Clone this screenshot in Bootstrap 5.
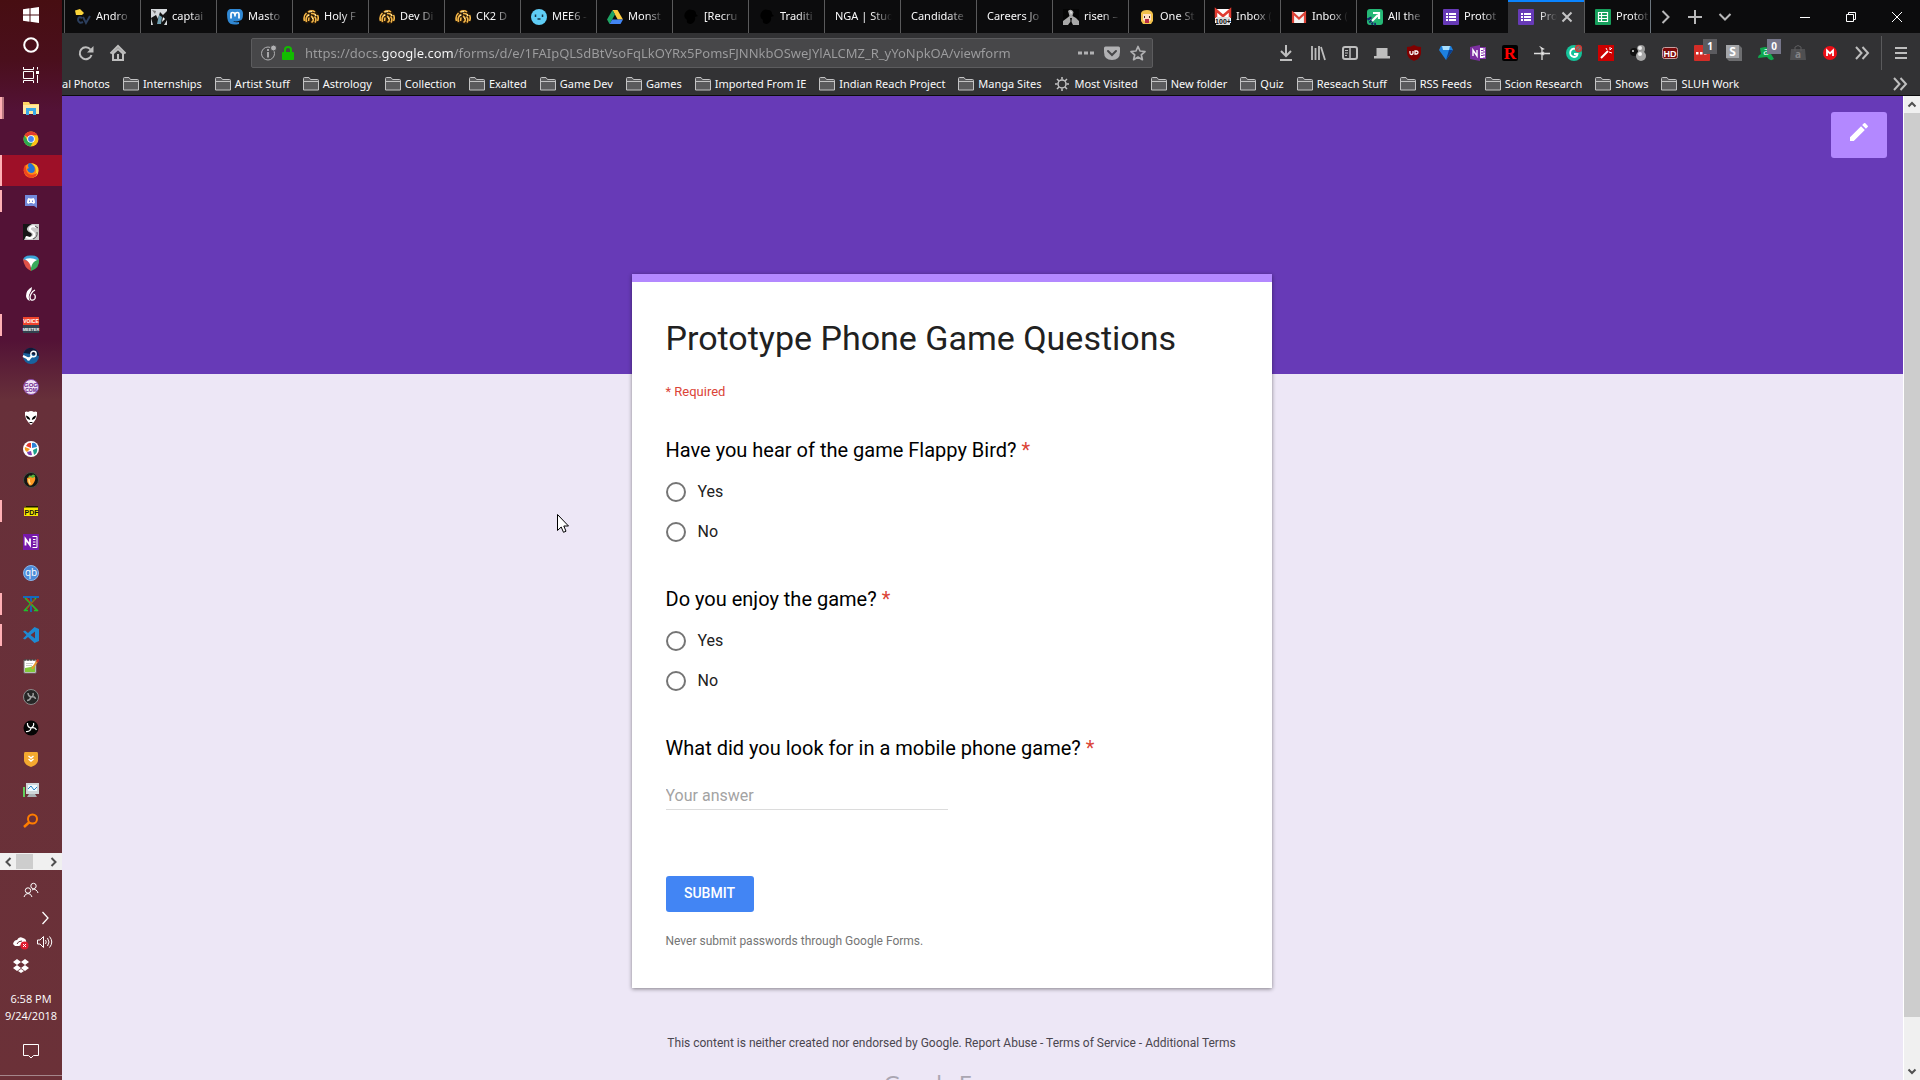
<!DOCTYPE html>
<html lang="en">
<head>
<meta charset="utf-8">
<meta name="viewport" content="width=device-width, initial-scale=1">
<title>Prototype Phone Game Questions</title>
<link href="https://cdn.jsdelivr.net/npm/bootstrap@5.3.0/dist/css/bootstrap.min.css" rel="stylesheet">
<style>
:root{--ui:"Noto Sans","Open Sans",sans-serif;--form:Roboto,"Liberation Sans",sans-serif}
body{font-family:var(--ui);background:#ede7f6}
svg{display:block;flex:none;overflow:visible}
button{font-family:inherit}
.plain{background:none;border:0;padding:0;color:inherit}
/* taskbar */
.taskbar{width:62px;background:linear-gradient(#470e12 0,#4a0f1c 60px,#531236 110px,#531236 340px,#67303a 400px,#6b3138 100%);color:#fff}
.task{height:31px;width:62px;position:relative;padding-bottom:1px}
.sys{height:30px;padding:0}
.systray{margin-bottom:3px}
.task.open::before{content:"";position:absolute;left:0;top:4px;width:2px;height:22px;background:#ffb0b5}
.task.multi::before{width:4px;border-right:2px solid #b97880}
.task.current{background:#9e1028}
.task.current::before{top:0;height:31px}
.hscroll{height:17px;background:#f0f0f0;color:#505050;margin-bottom:5px}
.hthumb{width:17px;height:15px;background:#cdcdcd}
.trayrow{height:24px;padding:0 9px 0 13px}
.clock{font:11px/17px "Open Sans",sans-serif}
.notice{margin-top:12px}
.deskline{height:1px;background:#a5868b}
/* browser chrome */
.tabstrip{height:33px;background:#0c0c0d;color:#f9f9fa;padding-left:2px}
.tabx{width:76px;height:33px;flex:none;border-left:1px solid #5a5a5b;padding-left:10px;font-size:11px;color:inherit;text-decoration:none}
.tabx .ttl{white-space:nowrap;flex:1;min-width:0;margin-left:5px;margin-right:8px;-webkit-mask-image:linear-gradient(90deg,#000 50%,transparent);mask-image:linear-gradient(90deg,#000 50%,transparent)}
.tabx .ttl:first-child{margin-left:0;-webkit-mask-image:linear-gradient(90deg,#000 65%,transparent);mask-image:linear-gradient(90deg,#000 65%,transparent)}
.tabx.now{background:#323234;border-left:0;box-shadow:inset 0 2px #0a84ff;padding-right:9px}
.tabx.now .ttl{margin-right:2px;margin-left:6px;-webkit-mask-image:linear-gradient(90deg,#000 0,transparent);mask-image:linear-gradient(90deg,#000 0,transparent)}
.tabx.cut{width:66px}
.tabx.cut .ttl{margin-right:0}
.stripbtn{width:30px;height:33px;color:#b8b8b9}
.winbtn{width:46px;height:33px;color:#fff}
.toolbar{height:40px;background:#323234;color:#bebebe;padding:0 3px 0 8px}
.tool{width:32px;height:32px;position:relative}
.urlbar{height:30px;margin:0 117px;background:#474749;border:1px solid #5c5c5e;border-radius:2px;padding:0 6px 0 9px}
.urlbar input{font-size:13px;line-height:20px;border:0;outline:0;padding:0;min-width:0;margin-left:10px;color:transparent;background:linear-gradient(90deg,#9d9d9f 77px,#f9f9fa 77px,#f9f9fa 149px,#9d9d9f 149px);-webkit-background-clip:text;background-clip:text}
.count{position:absolute;left:17px;top:2px;width:14px;height:15px;background:#5b5b5f;color:#fff;font:bold 10px/15px "Open Sans",sans-serif}
.count.soft{background:#76768a}
.vrule{width:1px;height:34px;background:#5a5a5c;margin:0 3px}
.bookmarks{height:23px;background:#323234;border-bottom:1px solid #0c0c0d;color:#f9f9fa;font-size:11px;overflow:hidden;padding-right:12px}
.bookmarks a{color:inherit;text-decoration:none;white-space:nowrap;gap:4px}
.bmlist{gap:13px}
.morebm{color:#bebebe}
/* form page */
.page{background:linear-gradient(#673ab7 278px,#ede7f6 278px);font-family:var(--form);position:relative;padding-right:62px}
.editbtn{position:absolute;right:16px;top:16px;width:56px;height:46px;background:#b388ff;border-radius:3px;padding-bottom:6px}
.sheet{width:640px;max-width:100%;margin-top:178px;border-top:8px solid #b388ff;background:#fff;padding:36px 34px 39px;box-shadow:0 1px 4px rgba(0,0,0,.45)}
.sheet h1{font-size:34px;line-height:40px;font-weight:400;color:#212121;margin:0}
.req{font-size:13px;line-height:20px;color:#db4437;margin:24px 0 0;padding-bottom:1px}
.sheet fieldset,.openq{margin-top:35px}
.qtitle{font-size:20px;line-height:24px;color:#000;margin:0 0 10px;float:none}
.star{color:#db4437}
.choice{height:40px;gap:12px;font-size:16px;line-height:20px;color:#212121}
.choice .form-check-input{width:20px;height:20px;border:2px solid #757575;margin:0;flex:none}
.answer{width:282px;height:28px;border:0;border-bottom:1px solid #dcdcdc;padding:0;font-size:16px;display:block;margin-top:22px}
.answer::placeholder{color:#a3a3a3}
.send{width:88px;height:36px;margin-top:66px;background:#4285f4;color:#fff;font-size:14px;line-height:20px;font-weight:500;border:0;border-radius:3px;padding:0 0 2px}
.never{font-size:12px;line-height:16px;color:#757575;margin:21px 0 0}
.legal{font-size:12px;line-height:16px;color:#4a464f;margin-top:47px}
.legal a{color:inherit;text-decoration:none}
.brand{font:22px/32px Lato,sans-serif;color:#aaa6b2;margin-top:16px}
.vscroll{width:17px;background:#f0f0f0;border-left:1px solid #fff;color:#505050}
.vthumb{background:#cdcdcd;flex:904}
.vrest{flex:46}
.pointer{position:absolute;left:495px;top:418px}
</style>
<script src="https://cdn.jsdelivr.net/npm/bootstrap@5.3.0/dist/js/bootstrap.bundle.min.js"></script>
</head>
<body class="d-flex vh-100 overflow-hidden">
<svg width="0" height="0" class="position-absolute" aria-hidden="true">
<defs>
<symbol id="folder" viewBox="0 0 16 14"><path d="M.5 13V1.500Q.5.5 1.500.5H6L7.500 2.500H14.500Q15.500 2.500 15.500 3.500V13Z" fill="#5b5b5d" stroke="#c3c3c4"/><path d="M1 4.500H15" stroke="#c3c3c4"/></symbol>
<symbol id="lion" viewBox="0 0 16 16"><path d="M0 11Q0 5 4 2Q8-.5 12 1.500Q16 4 16 10Q15 14 11 15.500L6 13L4 15Z" fill="#2a1a08"/><path d="M1.500 12Q0 7 3.500 4M3.500 13Q2 8 6 5.500M5 3Q9 .5 12 3M8 4.500Q12 4 13 7M14.500 6Q16 9 14.500 12M11.500 7.500Q14 10 12 13.500M8 7Q11 8.500 10 12L8.500 13.500M6 8.500L5.500 12" fill="none" stroke="#f6b848" stroke-width="1.600"/><path d="M6 3L9 2.500M4.500 7L6.500 6M12 5L13 7M9 8.500L10 10" stroke="#fff0b0" fill="none"/></symbol>
<symbol id="gform" viewBox="0 0 16 16"><rect width="16" height="16" rx="1" fill="#673ab7"/><path d="M3 4H5V6H3ZM3 7H5V9H3ZM3 10H5V12H3ZM6 4H13V6H6ZM6 7H13V9H6ZM6 10H13V12H6Z" fill="#fff"/></symbol>
<symbol id="darkbird" viewBox="0 0 16 16"><path d="M2 4Q5-1 9 1Q13 1 13 5L15 7L12 8Q13 13 8 15Q3 15 4 11Q0 9 2 4Z" fill="#000"/></symbol>
<symbol id="chev" viewBox="0 0 16 16"><path d="M4.500 2L10.500 8L4.500 14" fill="none" stroke="currentColor" stroke-width="2"/></symbol>
<symbol id="dchev" viewBox="0 0 16 16"><path d="M2 2L7.500 8L2 14M8.500 2L14 8L8.500 14" fill="none" stroke="currentColor" stroke-width="2"/></symbol>
<symbol id="onenote" viewBox="0 0 16 16"><path d="M9 2.500H15.500V13.500H9Z" fill="#fff" stroke="#8031a7"/><path d="M11 5.500H13.500M11 8H13.500M11 10.500H13.500" stroke="#8031a7"/><path d="M14 3V13" stroke="#8031a7" stroke-dasharray="2 1"/><path d="M0 2L10 0V16L0 14Z" fill="#7b2fa0"/><path d="M3 11V5L7 11V5" stroke="#fff" stroke-width="1.400" fill="none"/></symbol>
<symbol id="onenoteapp" viewBox="0 0 16 16"><path d="M0 0H16V16H0Z" fill="#7719aa"/><path d="M2.500 11.500V5L7 11V4.500" stroke="#fff" stroke-width="1.800" fill="none"/><path d="M9.500 2.500H14V13.500H9.500M10 5.500H12.500M10 8H12.500M10 10.500H12.500" stroke="#fff" fill="none"/></symbol>
</defs>
</svg>

<nav class="taskbar d-flex flex-column flex-shrink-0" aria-label="Taskbar">
<div class="systray">
<button class="plain task sys d-flex align-items-center justify-content-center" aria-label="Start"><svg width="16" height="16"><path d="M0 2.300L6.500 1.300V7.500H0ZM7.500 1.200L16 0V7.500H7.500ZM0 8.500H6.500V14.700L0 13.700ZM7.500 8.500H16V16L7.500 14.800Z" fill="#fff"/></svg></button>
<button class="plain task sys d-flex align-items-center justify-content-center" aria-label="Cortana"><svg width="16" height="16"><circle cx="8" cy="8" r="6.800" fill="none" stroke="#fff" stroke-width="2"/></svg></button>
<button class="plain task sys d-flex align-items-center justify-content-center" aria-label="Task view"><svg width="16" height="16"><path d="M.5 0V2.500H10.500V0M.5 16V13.500H10.500V16M.5 4.500H10.500V11.500H.5ZM14.500 0V2.500M14.500 8V16" fill="none" stroke="#fff"/><path d="M13 4H16V7H13Z" fill="#fff"/></svg></button>
</div>
<button class="plain task open multi d-flex align-items-center justify-content-center" aria-label="File Explorer"><svg width="16" height="16"><path d="M0 2H6L7 4H16V14H0Z" fill="#ffd766"/><path d="M0 5H16V14H0Z" fill="#ffe9a1"/><path d="M3 8H13V15H10V11H6V15H3Z" fill="#3aa9e8"/></svg></button>
<button class="plain task d-flex align-items-center justify-content-center" aria-label="Chrome"><svg width="16" height="16"><circle cx="8" cy="8" r="7.500" fill="#fbc116"/><path d="M8 8L1.500 4.200A7.500 7.500 0 0 1 14.500 4.200H8Z" fill="#e33b2e"/><path d="M1.500 4.200A7.500 7.500 0 0 0 7.500 15.500L10.500 10L8 8L4.500 9.500Z" fill="#2da94f"/><circle cx="8" cy="8" r="3.800" fill="#fff"/><circle cx="8" cy="8" r="2.900" fill="#4285f4"/></svg></button>
<button class="plain task open current d-flex align-items-center justify-content-center" aria-label="Firefox"><svg width="16" height="16"><circle cx="8" cy="8.500" r="7.300" fill="#ff8a16"/><path d="M8 1Q16 2 15.500 9Q15 15 9 15.800Q13 13 13 9Q13 4 8 1Z" fill="#ffd02b"/><path d="M6 1Q4 4 6 6L4 7Q5 11 9 11Q13 10 11.500 5Q9 1 6 1Z" fill="#2374d8"/><path d="M.8 6Q0 14 8 15.800Q14 15 14 11Q10 14 6 12Q3 10 3 6L2 3Z" fill="#f0431f"/></svg></button>
<button class="plain task open d-flex align-items-center justify-content-center" aria-label="Discord"><svg width="16" height="16"><path d="M2 2H14V15L11 13H2Z" fill="#7289da"/><path d="M4 10Q4 6 5.500 5L7 5.500H9L10.500 5Q12 6 12 10L10 11L9.500 10H6.500L6 11Z" fill="#fff"/><path d="M6 7.500H7V9H6ZM9 7.500H10V9H9Z" fill="#7289da"/></svg></button>
<button class="plain task d-flex align-items-center justify-content-center" aria-label="Scrivener"><svg width="16" height="16"><path d="M0 0H16V16H0Z" fill="#c9c9c9"/><path d="M0 0H9Q3 3 4 6Q5 8 8 9Q10 11 7 13L3 12L1 16H0Z" fill="#151515"/><path d="M13 3Q9 1 7 4Q6 6 9 7.500Q13 10 10 13Q7 15 3 13" fill="none" stroke="#fff" stroke-width="2"/><path d="M15 4L12 2M14 8Q15 13 10 15" fill="none" stroke="#555"/></svg></button>
<button class="plain task d-flex align-items-center justify-content-center" aria-label="Security suite"><svg width="16" height="16"><path d="M0 5Q1 0 8 .5Q15 0 16 5L12 8H4Z" fill="#3ba3d8"/><path d="M0 4L7 7L8 16Q1 13 0 4Z" fill="#df5148"/><path d="M16 4Q17 13 8 16L8 8Z" fill="#38ac5b"/><path d="M2 4Q9 2 14 5Q9 7 8 13Q7 7 2 4Z" fill="#fff"/></svg></button>
<button class="plain task d-flex align-items-center justify-content-center" aria-label="Flame"><svg width="16" height="16"><path d="M9 1Q3 4 3 10Q3.500 14 7 15Q4.500 11 7 7Q9 4 9 1Z" fill="#fff"/><path d="M12 4Q9.500 5 8 8Q6 12 8 13.800Q10.500 15 12 12.500Q13 9 10.500 8" fill="none" stroke="#fff" stroke-width="1.300"/></svg></button>
<button class="plain task open d-flex align-items-center justify-content-center" aria-label="Voicemeeter"><svg width="16" height="16"><path d="M0 0H16V8H0Z" fill="#ef442c"/><path d="M0 8H16V16H0Z" fill="#32424f"/><text x="8" y="6" font-size="5" font-weight="bold" font-family="Liberation Sans" fill="#fff" text-anchor="middle">VOICE</text><text x="8" y="14" font-size="4" font-weight="bold" font-family="Liberation Sans" fill="#fff" text-anchor="middle">MEETER</text></svg></button>
<button class="plain task d-flex align-items-center justify-content-center" aria-label="Steam"><svg width="16" height="16"><circle cx="8" cy="8" r="8" fill="#17629e"/><path d="M.5 5A8 8 0 0 1 16 8L8 6Z" fill="#101a38"/><circle cx="10.500" cy="6" r="2.700" fill="none" stroke="#fff" stroke-width="1.400"/><path d="M0 8L6 11L9 8" stroke="#fff" stroke-width="2" fill="none"/><circle cx="5.500" cy="11" r="1.800" fill="#fff"/></svg></button>
<button class="plain task d-flex align-items-center justify-content-center" aria-label="GOG"><svg width="16" height="16"><circle cx="8" cy="8" r="7.500" fill="#efe3f6" stroke="#8a4aac"/><text x="8" y="7.500" font-size="6" font-weight="bold" font-family="Liberation Sans" fill="#6a1c8c" text-anchor="middle">GOG</text><text x="8" y="12.500" font-size="5" font-weight="bold" font-family="Liberation Sans" fill="#6a1c8c" text-anchor="middle">COM</text></svg></button>
<button class="plain task d-flex align-items-center justify-content-center" aria-label="Alien"><svg width="16" height="16"><path d="M2 2Q4 1 5 2Q8 0 11 2Q12 1 14 2Q15 9 8 15Q1 9 2 2Z" fill="#fff"/><path d="M3 5.500Q7 6.500 7.200 10Q3 9 3 5.500ZM13 5.500Q9 6.500 8.800 10Q13 9 13 5.500Z" fill="#000"/><path d="M6.500 12.500H9.500" stroke="#000"/></svg></button>
<button class="plain task d-flex align-items-center justify-content-center" aria-label="Photos"><svg width="16" height="16"><circle cx="8" cy="8" r="8" fill="#fff"/><path d="M8 7L3 5Q5 1 8 2Z" fill="#e33b2e"/><path d="M9 7L9 2Q13 1 14 6Z" fill="#2d83d8"/><path d="M10 9L14 7Q15 12 11 14Z" fill="#1ca38b"/><path d="M8 10L9 14Q5 15 4 11Z" fill="#7d3fb1"/><path d="M7 8L4 11Q1 9 2 6Z" fill="#f39a1e"/></svg></button>
<button class="plain task d-flex align-items-center justify-content-center" aria-label="FL Studio"><svg width="16" height="16"><circle cx="8" cy="8" r="7.500" fill="#151515" stroke="#4a4a42"/><path d="M4 6Q3.500 10 6 13Q8 14.500 10 12Q13 8 12 5Q8 4 4 6Z" fill="#ff9a24"/><path d="M5 6Q6 2 8 4Q10 1 12.500 4L10 6L7 5Z" fill="#57b33c"/><path d="M6 7Q6 11 7.500 12" stroke="#ffe497" stroke-width="1.500" fill="none"/></svg></button>
<button class="plain task open d-flex align-items-center justify-content-center" aria-label="PDF viewer"><svg width="16" height="16"><path d="M1 13V5L3 3H15V13Z" fill="#f6e900"/><path d="M1 5L3 3H15V4.500H1Z" fill="#1a1a00"/><text x="8.500" y="11.500" font-size="7" font-weight="bold" font-family="Liberation Sans" fill="#111" text-anchor="middle">PDF</text></svg></button>
<button class="plain task d-flex align-items-center justify-content-center" aria-label="OneNote"><svg width="16" height="16"><use href="#onenoteapp"/></svg></button>
<button class="plain task d-flex align-items-center justify-content-center" aria-label="qBittorrent"><svg width="16" height="16"><circle cx="8" cy="8" r="7.500" fill="#4b8bd8" stroke="#8ab6ea"/><text x="8" y="11" font-size="10" font-family="Open Sans" fill="#fff" text-anchor="middle">qb</text></svg></button>
<button class="plain task open d-flex align-items-center justify-content-center" aria-label="X"><svg width="16" height="16"><path d="M0 1H16M8 1V16" stroke="#1568c0" stroke-width="1.800"/><path d="M3 2L14 15" stroke="#d91c1c" stroke-width="1.500"/><path d="M2 2L15 15M1 15L7 8.500L13 2M1 14.500H5M11 14.500H15" stroke="#1fc12c" stroke-width="1.600" fill="none"/><path d="M4 2L9 8M12 3L4 13" stroke="#d91c1c"/></svg></button>
<button class="plain task open d-flex align-items-center justify-content-center" aria-label="Visual Studio Code"><svg width="16" height="16"><path fill-rule="evenodd" d="M11.500 0L16 2V14L11.500 16L5 10L2 12.500L0 11.500L3.500 8L0 4.500L2 3.500L5 6ZM12 4.500L7.500 8L12 11.500Z" fill="#1f8ad2"/></svg></button>
<button class="plain task d-flex align-items-center justify-content-center" aria-label="Notepad++"><svg width="16" height="16"><path d="M1 2H13V15H1Z" fill="#fff" stroke="#777"/><path d="M2 10Q7 10 12 7V14H2Z" fill="#82c93a"/><path d="M2 1V3M5 1V3M8 1V3M11 1V3" stroke="#333"/><path d="M3 5.500H10M3 7.500H9" stroke="#ccc"/><path d="M15 2L9 11" stroke="#e8962e" stroke-width="2"/><path d="M15.500 1.500L14 4" stroke="#c52b23" stroke-width="2"/></svg></button>
<button class="plain task d-flex align-items-center justify-content-center" aria-label="OBS"><svg width="16" height="16"><circle cx="8" cy="8" r="7.500" fill="#262626" stroke="#8c8c8c"/><path d="M5 4Q5 7 8 8Q12 7 12.500 10M8 8Q7 11.500 4 11.500M8 8Q11 7 10 4" stroke="#a0a0a0" stroke-width="1.500" fill="none"/></svg></button>
<button class="plain task d-flex align-items-center justify-content-center" aria-label="OBS Studio"><svg width="16" height="16"><circle cx="8" cy="8" r="7.500" fill="#050505"/><path d="M4.500 3Q4 7 8 8Q12 6.500 13.500 10M8 8Q7.500 12 3 11.500M8 8Q11.500 6 10.500 3" stroke="#fff" stroke-width="1.200" fill="none"/></svg></button>
<button class="plain task d-flex align-items-center justify-content-center" aria-label="Shield"><svg width="16" height="16"><path d="M2 1H14Q15 1 15 3V10Q14 14 8 16Q2 14 1 10V3Q1 1 2 1Z" fill="#f4a92f"/><path d="M5.500 5L8 7L10.500 5M5.500 8L8 10L10.500 8" stroke="#fff" stroke-width="1.500" fill="none"/></svg></button>
<button class="plain task d-flex align-items-center justify-content-center" aria-label="System monitor"><svg width="16" height="16"><path d="M3 1H16V12H3Z" fill="#cfd6d9"/><path d="M5 3H14V9H5Z" fill="#eefaff"/><path d="M5 7L8 4L11 8L14 5" stroke="#2784c5" fill="none"/><path d="M0 5H2V15H0Z" fill="#61cf5a"/><path d="M6 12H12L14 15H4Z" fill="#aab2b5"/></svg></button>
<button class="plain task d-flex align-items-center justify-content-center" aria-label="Search"><svg width="16" height="16"><circle cx="9.500" cy="6" r="4.500" fill="none" stroke="#ff7d00" stroke-width="2"/><path d="M6.500 9L1 14" stroke="#ff7d00" stroke-width="2.500"/></svg></button>
<div class="flex-grow-1"></div>
<div class="hscroll d-flex align-items-center flex-shrink-0"><svg class="ms-1 me-1" width="8" height="10"><path d="M6.500 1L2.500 5L6.500 9" fill="none" stroke="#505050" stroke-width="2"/></svg><span class="hthumb"></span><svg class="ms-auto me-1" width="8" height="10"><path d="M1.500 1L5.500 5L1.500 9" fill="none" stroke="#505050" stroke-width="2"/></svg></div>
<button class="plain task d-flex align-items-center justify-content-center" aria-label="People"><svg width="16" height="16"><circle cx="10.500" cy="4" r="2.700" fill="none" stroke="#fff"/><circle cx="5" cy="8.500" r="2.700" fill="none" stroke="#fff"/><path d="M1 15Q2 11.500 5 11.500Q8 11.500 9 15M9 8Q11 6 13 8Q14.500 9 15 11" fill="none" stroke="#fff"/></svg></button>
<div class="d-flex flex-column flex-shrink-0">
<button class="plain trayrow d-flex align-items-center justify-content-end" aria-label="Show hidden icons"><svg width="16" height="16"><path d="M5.500 2L11 8L5.500 14" fill="none" stroke="#fff" stroke-width="1.300"/></svg></button>
<div class="trayrow d-flex align-items-center justify-content-between"><svg width="16" height="16"><path d="M0 10Q1 6 4 6Q6 2 10 4Q14 5 13 9L6 12H2Z" fill="#fff"/><path d="M4 10Q5 7 9 7" stroke="#6b3138" fill="none"/><circle cx="11.500" cy="11.500" r="4" fill="#e01b2f"/><path d="M10 10L13 13M13 10L10 13" stroke="#fff"/></svg><svg width="16" height="16"><path d="M.5 6V10H3L6.500 13.500V2.500L3 6ZM8.500 6Q10 8 8.500 10M10.500 4Q13.500 8 10.500 12M12.500 2.500Q17 8 12.500 13.500" fill="none" stroke="#fff"/></svg></div>
<div class="trayrow d-flex align-items-center"><svg width="16" height="14"><path d="M4 0L8 3L4 6L0 3ZM12 0L16 3L12 6L8 3ZM4 6L8 9L4 12L0 9ZM12 6L16 9L12 12L8 9ZM8 10L11 12L8 14L5 12Z" fill="#fff"/></svg></div>
</div>
<div class="clock text-center mt-2 pt-1 flex-shrink-0">6:58 PM<br>9/24/2018</div>
<button class="plain task notice d-flex align-items-center justify-content-center" aria-label="Action center"><svg width="16" height="16"><path d="M.5 1.500H15.500V12.500H10.500L8 15L5.500 12.500H.5Z" fill="none" stroke="#fff"/></svg></button>
<div class="deskline mb-1 mt-2 flex-shrink-0"></div>
</nav>

<div class="d-flex flex-column flex-grow-1 overflow-hidden">
<header>
<div class="tabstrip d-flex align-items-center">
<a href="#" class="tabx d-flex align-items-center"><svg width="16" height="16"><path d="M0 1.500L5 0L9 4L7 6H1Z" fill="#fcd53a"/><path d="M7 9Q3 7 3 11Q4 15 8 13M8 8L11 14L15 7" fill="none" stroke="#2c3f5e" stroke-width="2"/></svg><span class="ttl">Andro</span></a>
<a href="#" class="tabx d-flex align-items-center"><svg width="16" height="16"><path d="M0 0H16V16H0Z" fill="#d5d9dc"/><path d="M0 9L5 6L7 10L9 3L12 6L16 2V11L13 16H2Z" fill="#111"/><path d="M8 6L11 8L10 15H6Z" fill="#6e9eb0"/><path d="M1 1L5 2L4 5Z" fill="#777"/><path d="M12 8L14 10L11 13Z" fill="#fff"/></svg><span class="ttl">captai</span></a>
<a href="#" class="tabx d-flex align-items-center"><svg width="16" height="16"><path d="M3 0H13Q16 1 16 5Q16 11 13 11.500Q9 13 6 12Q8 14 12 13V15Q3 17 1 12Q0 9 0 5Q0 1 3 0Z" fill="#3088d4"/><path d="M4 9.500V5Q4 3.500 5.500 3.500Q8 3.500 8 6V7.500M8 6Q8 3.500 10.500 3.500Q12 3.500 12 5V9.500" fill="none" stroke="#fff" stroke-width="1.700"/></svg><span class="ttl">Masto</span></a>
<a href="#" class="tabx d-flex align-items-center"><svg width="16" height="16"><use href="#lion"/></svg><span class="ttl">Holy F</span></a>
<a href="#" class="tabx d-flex align-items-center"><svg width="16" height="16"><use href="#lion"/></svg><span class="ttl">Dev Di</span></a>
<a href="#" class="tabx d-flex align-items-center"><svg width="16" height="16"><use href="#lion"/></svg><span class="ttl">CK2 D</span></a>
<a href="#" class="tabx d-flex align-items-center"><svg width="16" height="16"><circle cx="8" cy="8" r="8" fill="#5fcdf5"/><path d="M4.500 5.500V8M11.500 5.500V8M6.500 10H9.500" stroke="#173647" stroke-width="1.500"/></svg><span class="ttl">MEE6 -</span></a>
<a href="#" class="tabx d-flex align-items-center"><svg width="16" height="16"><path d="M5.500 1H10.500L16 10.500H10.700Z" fill="#ffcd40"/><path d="M5.500 1L8 5.500L2.600 15L0 10.500Z" fill="#1fa463"/><path d="M5.200 10.500H16L13.500 15H2.600Z" fill="#4285f4"/></svg><span class="ttl">Monst</span></a>
<a href="#" class="tabx d-flex align-items-center"><svg width="16" height="16"><use href="#darkbird"/></svg><span class="ttl">[Recru</span></a>
<a href="#" class="tabx d-flex align-items-center"><svg width="16" height="16"><use href="#darkbird"/></svg><span class="ttl">Traditi</span></a>
<a href="#" class="tabx d-flex align-items-center"><span class="ttl">NGA | Stud</span></a>
<a href="#" class="tabx d-flex align-items-center"><span class="ttl">Candidate</span></a>
<a href="#" class="tabx d-flex align-items-center"><span class="ttl">Careers Jo</span></a>
<a href="#" class="tabx d-flex align-items-center"><svg width="16" height="16"><path d="M0 0H16V16H0Z" fill="#050505"/><path d="M5 2Q8-1 10.500 3L9.500 7L13 9L16 12V16H10L8 12L5 16H0V12L4 9L6.500 7Z" fill="#a9a9a9"/><path d="M7 2L9 3L8 6Z" fill="#eee"/><path d="M7 9L8 15L9 9Z" fill="#111"/></svg><span class="ttl">risen –</span></a>
<a href="#" class="tabx d-flex align-items-center"><svg width="16" height="16"><path d="M2 4Q3 1 8 1Q13 1 14 5V12L12 15H4L2 12Z" fill="#f2c14b"/><path d="M4 5H12V11L8 14L4 11Z" fill="#ffdfc4"/><path d="M5 7H6V9H5ZM10 7H11V9H10Z" fill="#3b2a20"/><path d="M6 10H10V14H6Z" fill="#b92c45"/></svg><span class="ttl">One St</span></a>
<a href="#" class="tabx d-flex align-items-center"><svg width="16" height="16"><path d="M0 0H16V14H0Z" fill="#fff"/><path d="M1 9V1L8 7L15 1V9" fill="none" stroke="#e03a30" stroke-width="2.500"/><rect x="1" y="8" width="14" height="8" fill="#ddd"/><text x="8" y="15" font-size="7" font-weight="bold" font-family="Liberation Sans" fill="#111" text-anchor="middle">100+</text></svg><span class="ttl">Inbox (</span></a>
<a href="#" class="tabx d-flex align-items-center"><svg width="16" height="16"><path d="M1 3H15V14H1Z" fill="#f4f4f4"/><path d="M2 14V4L8 9.500L14 4V14" fill="none" stroke="#dd4337" stroke-width="2.200"/></svg><span class="ttl">Inbox (</span></a>
<a href="#" class="tabx d-flex align-items-center"><svg width="16" height="16"><rect width="16" height="16" rx="3" fill="#25b876"/><path d="M1 9Q4 16 9 15M3 8L5 13" stroke="#16296b" stroke-width="2.500" stroke-dasharray="2 1" fill="none"/><path d="M5 12L11 6M6 4H12V10" stroke="#fff" stroke-width="2.200" fill="none"/></svg><span class="ttl">All the</span></a>
<a href="#" class="tabx d-flex align-items-center"><svg width="16" height="16"><use href="#gform"/></svg><span class="ttl">Protot</span></a>
<a href="#" class="tabx now d-flex align-items-center"><svg width="16" height="16"><use href="#gform"/></svg><span class="ttl">Pro</span><svg width="16" height="16"><path d="M3.500 3.500L12.500 12.500M12.500 3.500L3.500 12.500" stroke="#c3c3c4" stroke-width="2"/></svg></a>
<a href="#" class="tabx cut d-flex align-items-center"><svg width="16" height="16"><rect width="16" height="16" rx="1" fill="#17a05d"/><path d="M3.500 3.500H12.500V12.500H3.500ZM3.500 6.500H12.500M3.500 9.500H12.500M6.500 3.500V12.500" fill="none" stroke="#fff" stroke-width="1.200"/></svg><span class="ttl">Protot</span></a>
<button class="plain stripbtn border-start border-secondary d-flex align-items-center justify-content-center" aria-label="Scroll tabs"><svg width="16" height="16"><use href="#chev"/></svg></button>
<button class="plain stripbtn d-flex align-items-center justify-content-center" aria-label="New tab"><svg width="14" height="14"><path d="M7 0V14M0 7H14" stroke="currentColor" stroke-width="2"/></svg></button>
<button class="plain stripbtn d-flex align-items-center justify-content-center" aria-label="All tabs"><svg width="14" height="14"><path d="M1.500 4L7 9.500L12.500 4" fill="none" stroke="currentColor" stroke-width="2"/></svg></button>
<button class="plain winbtn ms-auto d-flex align-items-center justify-content-center" aria-label="Minimize"><svg width="10" height="10"><path d="M0 5.500H10" stroke="#fff"/></svg></button>
<button class="plain winbtn d-flex align-items-center justify-content-center" aria-label="Restore"><svg width="10" height="10"><path d="M.5 2.500H7.500V9.500H.5ZM2.500 2.500V.5H9.500V7.500H7.500" fill="none" stroke="#fff"/></svg></button>
<button class="plain winbtn d-flex align-items-center justify-content-center" aria-label="Close"><svg width="10" height="10"><path d="M0 0L10 10M10 0L0 10" stroke="#fff"/></svg></button>
</div>
<div class="toolbar d-flex align-items-center">
<button class="plain tool d-flex align-items-center justify-content-center" aria-label="Reload"><svg width="16" height="16"><path d="M13.500 10A6 6 0 1 1 12.500 4.500" fill="none" stroke="currentColor" stroke-width="2"/><path d="M15.500 1V7.500H9Z" fill="currentColor"/></svg></button>
<button class="plain tool d-flex align-items-center justify-content-center" aria-label="Home"><svg width="16" height="16"><path d="M.5 8.500L8 1L15.500 8.500" fill="none" stroke="currentColor" stroke-width="2"/><path d="M3 8.500V15H13V8.500L8 4Z" fill="none" stroke="currentColor" stroke-width="2"/><path d="M7 9H9V15H7Z" fill="currentColor"/></svg></button>
<form class="urlbar d-flex align-items-center flex-grow-1">
<svg width="16" height="16"><circle cx="7" cy="8.500" r="6.500" fill="none" stroke="#b1b1b3"/><path d="M7 7V12.500M7 4V6" stroke="#b1b1b3" stroke-width="1.800"/><circle cx="12.500" cy="3" r="3" fill="#b1b1b3" stroke="#474749"/></svg>
<svg class="ms-1" width="14" height="16"><path d="M4 7V4.500Q4 2 7 2Q10 2 10 4.500V7" fill="none" stroke="#12bc00" stroke-width="2"/><rect x="1" y="7" width="12" height="8" rx="1" fill="#12bc00"/></svg>
<input id="addr" class="flex-grow-1 me-3" type="text" aria-label="Address" value="https://docs.google.com/forms/d/e/1FAIpQLSdBtVsoFqLkOYRx5PomsFJNNkbOSweJYlALCMZ_R_yYoNpkOA/viewform">
<svg width="16" height="16"><path d="M0 6.500H4V9.500H0ZM6 6.500H10V9.500H6ZM12 6.500H16V9.500H12Z" fill="#b1b1b3"/></svg>
<svg class="ms-2 me-2" width="20" height="16"><path d="M3.500 1.500H16.500Q18 1.500 18 3V7Q18 15 10 15Q2 15 2 7V3Q2 1.500 3.500 1.500Z" fill="#b1b1b3"/><path d="M6 6L10 10L14 6" fill="none" stroke="#474749" stroke-width="2" stroke-linecap="round"/></svg>
<svg width="16" height="16"><path d="M8 1.500L10 6L15 6.500L11.300 9.800L12.400 14.700L8 12.100L3.600 14.700L4.700 9.800L1 6.500L6 6Z" fill="none" stroke="#b1b1b3" stroke-width="1.700" stroke-linejoin="round"/></svg>
</form>
<button class="plain tool d-flex align-items-center justify-content-center" aria-label="Downloads"><svg width="16" height="16"><path d="M8 0V11M3 6L8 11L13 6M2 15H14" fill="none" stroke="currentColor" stroke-width="2"/></svg></button>
<button class="plain tool d-flex align-items-center justify-content-center" aria-label="Library"><svg width="16" height="16"><path d="M2 1V15M5.500 3V15M9 1V15M11 2L15 15" stroke="currentColor" stroke-width="1.800"/></svg></button>
<button class="plain tool d-flex align-items-center justify-content-center" aria-label="Sidebar"><svg width="16" height="16"><rect x="1" y="2" width="14" height="12" rx="2" fill="none" stroke="currentColor" stroke-width="2"/><path d="M8 2V14" stroke="currentColor" stroke-width="1.500"/><path d="M3 5.500H6M3 8H6M3 10.500H5" stroke="currentColor"/></svg></button>
<button class="plain tool d-flex align-items-center justify-content-center" aria-label="Hat"><svg width="16" height="16"><path d="M2.500 3H13.500V11H16V13.500H0V11H2.500Z" fill="currentColor"/></svg></button>
<button class="plain tool d-flex align-items-center justify-content-center" aria-label="uBlock"><svg width="16" height="16"><path d="M8 0Q11 2 15 2V8Q15 13 8 16Q1 13 1 8V2Q5 2 8 0Z" fill="#800000"/><path d="M4 6V8Q4 9.500 5.500 9.500Q7 9.500 7 8V6M9 6V9H10.500Q12 9 12 7.500Q12 6 10.500 6Z" fill="none" stroke="#fff" stroke-width="1.300"/></svg></button>
<button class="plain tool d-flex align-items-center justify-content-center" aria-label="Diamond"><svg width="16" height="16"><path d="M3 1H13L15 5L8 15L1 5Z" fill="#1d81e0"/><path d="M4 1H12L11 5H5Z" fill="#a9e0ff"/><path d="M8 15L11 5H15Z" fill="#0b3f8f"/></svg></button>
<button class="plain tool d-flex align-items-center justify-content-center" aria-label="OneNote clipper"><svg width="16" height="16"><use href="#onenote"/></svg></button>
<button class="plain tool d-flex align-items-center justify-content-center" aria-label="R"><svg width="16" height="16"><rect width="16" height="16" rx="2" fill="#000"/><text x="8" y="14" font-size="17" font-weight="bold" font-family="Liberation Serif" fill="#f00" text-anchor="middle">R</text></svg></button>
<button class="plain tool d-flex align-items-center justify-content-center" aria-label="Faucet"><svg width="16" height="16"><path d="M0 8.500H7M9 8.500H16M8 3V15" stroke="#ddd" stroke-width="1.300"/><path d="M5.500 1L8 5L10.500 4M7 7H10V10H7Z" fill="#eee" stroke="#aaa" stroke-width=".7"/></svg></button>
<button class="plain tool d-flex align-items-center justify-content-center" aria-label="Grammarly"><svg width="16" height="16"><circle cx="8" cy="8" r="8" fill="#15c39a"/><path d="M11 5Q7 2 4.500 6Q3 11 8 12Q11 12 11.500 9H8" fill="none" stroke="#fff" stroke-width="1.800"/><circle cx="12.500" cy="3.500" r="3" fill="#777" stroke="#d13a33" stroke-width="1.300"/><path d="M10.500 5.500L14.500 1.500" stroke="#d13a33"/></svg></button>
<button class="plain tool d-flex align-items-center justify-content-center" aria-label="Magic wand"><svg width="16" height="16"><path d="M0 0H16V16H0Z" fill="#cc0000"/><path d="M3 13L10 6" stroke="#fff" stroke-width="2"/><path d="M8 3L9 5M12 2V5M11 7L14 8M12 5L14 3" stroke="#fff"/></svg></button>
<button class="plain tool d-flex align-items-center justify-content-center" aria-label="Spheres"><svg width="16" height="16"><circle cx="11" cy="4" r="4" fill="#999"/><circle cx="4" cy="7" r="4" fill="#111"/><circle cx="11" cy="11" r="5" fill="#a6a6a6"/><circle cx="10" cy="3" r="2" fill="#eee"/><circle cx="10" cy="9" r="2" fill="#f4f4f4"/><circle cx="3" cy="6" r="1" fill="#ddd"/></svg></button>
<button class="plain tool d-flex align-items-center justify-content-center" aria-label="HD"><svg width="16" height="16"><rect x=".5" y="2.500" width="15" height="11" rx="2" fill="#7d0a0a" stroke="#c9a1a1"/><text x="8" y="11.500" font-size="9" font-weight="bold" font-family="Liberation Sans" fill="#fff" text-anchor="middle">HD</text></svg></button>
<button class="plain tool d-flex align-items-center justify-content-center" aria-label="LastPass"><svg width="16" height="16"><rect width="16" height="16" rx="1" fill="#d32d27"/><path d="M2 7H4.500V9.500H2ZM6 7H8.500V9.500H6ZM10 7H12.500V9.500H10Z" fill="#fff"/></svg><span class="count">1</span></button>
<button class="plain tool d-flex align-items-center justify-content-center" aria-label="Stylus"><svg width="16" height="16"><path d="M0 0H13L16 3V16H3L0 13Z" fill="#6d6e70"/><rect width="13" height="13" fill="#a3a5a8"/><text x="6.500" y="11" font-size="12" font-weight="bold" font-family="Open Sans" fill="#fff" text-anchor="middle">S</text></svg></button>
<button class="plain tool d-flex align-items-center justify-content-center" aria-label="Amazon assistant"><svg width="16" height="16"><path d="M2 3L7 2L14 4L13 9L16 14Q12 17 9 12L0 13Q0 10 3 9Z" fill="#10a84d"/><text x="8" y="10" font-size="10" font-family="Open Sans" fill="#fff" text-anchor="middle">a</text></svg><span class="count soft">0</span></button>
<button class="plain tool d-flex align-items-center justify-content-center" aria-label="Shopping bag"><svg width="16" height="16"><path d="M1 4H15L16 15H0Z" fill="#4f4f51"/><path d="M5 6V2Q8-1 11 2V6" fill="none" stroke="#5d5d5f"/><text x="8" y="13" font-size="10" font-weight="bold" font-family="Open Sans" fill="#858587" text-anchor="middle">a</text></svg></button>
<button class="plain tool d-flex align-items-center justify-content-center" aria-label="Mega"><svg width="16" height="16"><circle cx="8" cy="8" r="7" fill="#ec0e16"/><path d="M5 11V5.500L8 8.500L11 5.500V11" fill="none" stroke="#fff" stroke-width="1.800"/></svg></button>
<button class="plain tool d-flex align-items-center justify-content-center" aria-label="More tools"><svg width="16" height="16"><use href="#dchev"/></svg></button>
<span class="vrule"></span>
<button class="plain tool d-flex align-items-center justify-content-center" aria-label="Menu"><svg width="12" height="12"><path d="M0 1H12M0 6H12M0 11H12" stroke="currentColor" stroke-width="2"/></svg></button>
</div>
<nav class="bookmarks d-flex align-items-center" aria-label="Bookmarks">
<div class="bmlist d-flex align-items-center">
<a href="#">al Photos</a>
<a href="#" class="d-flex align-items-center"><svg width="16" height="14"><use href="#folder"/></svg>Internships</a>
<a href="#" class="d-flex align-items-center"><svg width="16" height="14"><use href="#folder"/></svg>Artist Stuff</a>
<a href="#" class="d-flex align-items-center"><svg width="16" height="14"><use href="#folder"/></svg>Astrology</a>
<a href="#" class="d-flex align-items-center"><svg width="16" height="14"><use href="#folder"/></svg>Collection</a>
<a href="#" class="d-flex align-items-center"><svg width="16" height="14"><use href="#folder"/></svg>Exalted</a>
<a href="#" class="d-flex align-items-center"><svg width="16" height="14"><use href="#folder"/></svg>Game Dev</a>
<a href="#" class="d-flex align-items-center"><svg width="16" height="14"><use href="#folder"/></svg>Games</a>
<a href="#" class="d-flex align-items-center"><svg width="16" height="14"><use href="#folder"/></svg>Imported From IE</a>
<a href="#" class="d-flex align-items-center"><svg width="16" height="14"><use href="#folder"/></svg>Indian Reach Project</a>
<a href="#" class="d-flex align-items-center"><svg width="16" height="14"><use href="#folder"/></svg>Manga Sites</a>
<a href="#" class="d-flex align-items-center"><svg width="16" height="14"><circle cx="8" cy="7" r="4" fill="none" stroke="#c3c3c4" stroke-width="1.500"/><path d="M8 0V2.500M8 11.500V14M1 7H3.500M12.500 7H15M3 2L5 4M13 2L11 4M3 12L5 10M13 12L11 10" stroke="#c3c3c4" stroke-width="1.500"/></svg>Most Visited</a>
<a href="#" class="d-flex align-items-center"><svg width="16" height="14"><use href="#folder"/></svg>New folder</a>
<a href="#" class="d-flex align-items-center"><svg width="16" height="14"><use href="#folder"/></svg>Quiz</a>
<a href="#" class="d-flex align-items-center"><svg width="16" height="14"><use href="#folder"/></svg>Reseach Stuff</a>
<a href="#" class="d-flex align-items-center"><svg width="16" height="14"><use href="#folder"/></svg>RSS Feeds</a>
<a href="#" class="d-flex align-items-center"><svg width="16" height="14"><use href="#folder"/></svg>Scion Research</a>
<a href="#" class="d-flex align-items-center"><svg width="16" height="14"><use href="#folder"/></svg>Shows</a>
<a href="#" class="d-flex align-items-center"><svg width="16" height="14"><use href="#folder"/></svg>SLUH Work</a>
</div>
<button class="plain morebm ms-auto" aria-label="More bookmarks"><svg width="16" height="16"><use href="#dchev"/></svg></button>
</nav>
</header>

<div class="d-flex flex-grow-1 overflow-hidden">
<main class="page flex-grow-1 overflow-hidden d-flex flex-column align-items-center">
<button class="plain editbtn d-flex align-items-center justify-content-center" aria-label="Edit this form"><svg width="24" height="24" viewBox="0 0 24 24"><path d="M3 17.250V21H6.750L17.800 9.940L14.060 6.190ZM20.700 7.040A1 1 0 0 0 20.700 5.630L18.370 3.290A1 1 0 0 0 16.960 3.290L15.130 5.120L18.880 8.870Z" fill="#fff"/></svg></button>
<form class="sheet flex-shrink-0">
<h1>Prototype Phone Game Questions</h1>
<p class="req">* Required</p>
<fieldset>
<legend class="qtitle">Have you hear of the game Flappy Bird? <span class="star">*</span></legend>
<div class="choice d-flex align-items-center"><input class="form-check-input" type="radio" name="heard" id="h1"><label for="h1">Yes</label></div>
<div class="choice d-flex align-items-center"><input class="form-check-input" type="radio" name="heard" id="h2"><label for="h2">No</label></div>
</fieldset>
<fieldset>
<legend class="qtitle">Do you enjoy the game? <span class="star">*</span></legend>
<div class="choice d-flex align-items-center"><input class="form-check-input" type="radio" name="enjoy" id="e1"><label for="e1">Yes</label></div>
<div class="choice d-flex align-items-center"><input class="form-check-input" type="radio" name="enjoy" id="e2"><label for="e2">No</label></div>
</fieldset>
<div class="openq">
<label class="qtitle d-block mb-0" for="look">What did you look for in a mobile phone game? <span class="star">*</span></label>
<input class="answer" id="look" type="text" placeholder="Your answer">
</div>
<button class="send d-block" type="button">SUBMIT</button>
<p class="never">Never submit passwords through Google Forms.</p>
</form>
<div class="legal text-center flex-shrink-0">This content is neither created nor endorsed by Google. <a href="#">Report Abuse</a> - <a href="#">Terms of Service</a> - <a href="#">Additional Terms</a></div>
<div class="brand flex-shrink-0">Google Forms</div>
<svg class="pointer" width="12" height="19"><path d="M.5.5V16.500L4.200 13L6.500 18.300L9 17.200L6.800 12H11.500Z" fill="#fff" stroke="#000"/></svg>
</main>
<div class="vscroll d-flex flex-column flex-shrink-0">
<svg width="16" height="17"><path d="M4.500 10.500L8 7L11.500 10.500" fill="none" stroke="#505050" stroke-width="2"/></svg>
<div class="vthumb"></div><div class="vrest"></div>
<svg width="16" height="17"><path d="M4.500 6.500L8 10L11.500 6.500" fill="none" stroke="#505050" stroke-width="2"/></svg>
</div>
</div>
</div>
</body>
</html>
